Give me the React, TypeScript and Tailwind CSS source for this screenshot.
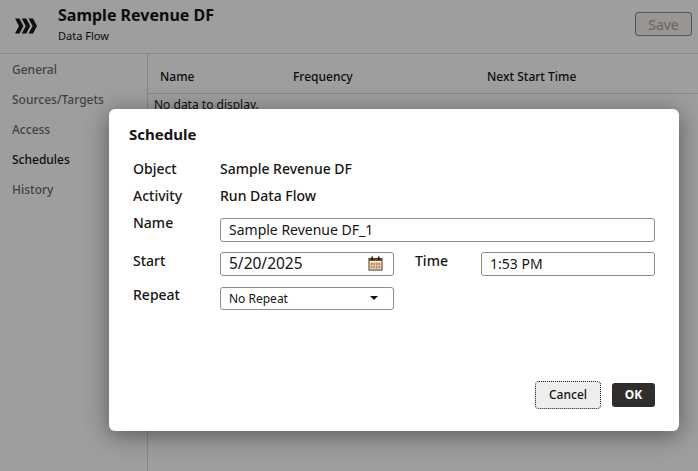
import React from 'react';

const font = "font-['Noto_Sans','Open_Sans',sans-serif]";

const navItems = ['General', 'Sources/Targets', 'Access', 'Schedules', 'History'];

const Chevrons = () => (
  <svg width="24" height="16" viewBox="0 0 24 16" fill="#161513">
    <path d="M0 0.5h4.4l4 7.5-4 7.5H0L4 8z" />
    <path d="M6.8 0.5h4.4l4 7.5-4 7.5H6.8L10.8 8z" />
    <path d="M13.6 0.5H18l4 7.5-4 7.5h-4.4L17.6 8z" />
  </svg>
);

const CalendarIcon = () => (
  <svg width="15" height="15" viewBox="0 0 15 15" fill="none">
    <rect x="1" y="2.5" width="13" height="11.5" stroke="#3a2a1c" strokeWidth="1" />
    <rect x="1" y="2.5" width="13" height="2.5" fill="#7a4a1c" />
    <rect x="3.5" y="0.5" width="1.5" height="3.5" fill="#161513" />
    <rect x="10" y="0.5" width="1.5" height="3.5" fill="#161513" />
    <rect x="2.5" y="6.5" width="10" height="6" fill="#c08a50" />
    <path d="M5 6.5v6M7.5 6.5v6M10 6.5v6M2.5 9.5h10" stroke="#e8e0d8" strokeWidth="0.7" />
  </svg>
);

const App: React.FC = () => {
  return (
    <div className={`relative h-[471px] w-[698px] overflow-hidden bg-white text-[#161513] ${font}`}>
      <header className="flex h-[54px] items-center border-b border-[#dcdcdc] pr-[6px]">
        <div className="ml-[15px] mt-[-1px] w-[43px]">
          <Chevrons />
        </div>
        <div className="flex-1 self-start pt-[3px]">
          <h1 className="text-[16px] font-bold leading-[24px]">Sample Revenue DF</h1>
          <p className="mt-[2px] text-[11px] leading-[14px]">Data Flow</p>
        </div>
        <button className="mt-[-5px] h-[24px] w-[57px] rounded-[3px] border border-[#8d8985] bg-[#f5f0ee] text-[14px] text-[#a8a5a2]">
          Save
        </button>
      </header>

      <div className="flex h-[417px]">
        <nav className="flex w-[148px] flex-col gap-[11px] border-r border-[#dcdcdc] pl-[12px] pt-[6px]">
          {navItems.map((item) => (
            <a
              key={item}
              className={`text-[12px] font-medium leading-[19px] ${item === 'Schedules' ? 'text-[#161513]' : 'text-[#6d6c6a]'}`}
            >
              {item}
            </a>
          ))}
        </nav>
        <div className="flex-1">
          <div className="grid h-[40px] grid-cols-[133px_194px_1fr] items-center border-b border-[#dcdcdc] pl-[12px] pt-[6px] text-[12px] font-medium">
            <span>Name</span>
            <span>Frequency</span>
            <span>Next Start Time</span>
          </div>
          <p className="pl-[6px] pt-[2px] text-[12px] leading-[18px]">No data to display.</p>
        </div>
      </div>

      <div className="absolute inset-0 bg-black/[0.38]">
        <div className="ml-[109px] mt-[109px] flex h-[322px] w-[570px] flex-col rounded-[6px] bg-white pl-[20px] pr-[24px] shadow-[0_4px_24px_rgba(0,0,0,0.45)]">
          <h2 className="pt-[15px] text-[15px] font-bold leading-[20px]">Schedule</h2>

          <div className="mt-[15px] pl-[4px] text-[14px] font-medium">
            <div className="flex h-[18px] items-center">
              <span className="w-[87px]">Object</span>
              <span>Sample Revenue DF</span>
            </div>
            <div className="mt-[9px] flex h-[18px] items-center">
              <span className="w-[87px]">Activity</span>
              <span>Run Data Flow</span>
            </div>

            <div className="mt-[14px] flex h-[24px]">
              <span className="mt-[-4px] w-[87px] leading-[18px]">Name</span>
              <div className="flex h-[24px] flex-1 items-center rounded-[3px] border border-[#8f8d8b] pb-[1px] pl-[8px] text-[14px] font-normal">
                Sample Revenue DF_1
              </div>
            </div>

            <div className="mt-[10px] flex h-[24px]">
              <span className="w-[87px] leading-[18px]">Start</span>
              <div className="flex h-[24px] w-[174px] items-center justify-between rounded-[3px] border border-[#8f8d8b] pb-[1px] pl-[8px] pr-[10px] text-[15.5px] font-normal">
                5/20/2025
                <CalendarIcon />
              </div>
              <span className="ml-[21px] w-[66px] leading-[18px]">Time</span>
              <div className="flex h-[24px] flex-1 items-center rounded-[3px] border border-[#8f8d8b] pb-[1px] pl-[8px] text-[14px] font-normal">
                1:53 PM
              </div>
            </div>

            <div className="mt-[11px] flex h-[23px]">
              <span className="mt-[-1px] w-[87px] leading-[18px]">Repeat</span>
              <div className="flex h-[23px] w-[174px] items-center justify-between rounded-[3px] border border-[#8f8d8b] pl-[8px] pr-[15px] text-[12px] font-normal">
                No Repeat
                <span className="mt-[-2px] h-0 w-0 border-x-[4px] border-t-[4px] border-x-transparent border-t-[#161513]" />
              </div>
            </div>
          </div>

          <div className="mb-[22px] mt-auto flex justify-end gap-[11px]">
            <button className="h-[28px] w-[66px] rounded-[4px] border border-dotted border-[#161513] bg-[#eeeeec] text-[12px] font-medium">
              Cancel
            </button>
            <button className="mt-[2px] h-[24px] w-[43px] rounded-[3px] bg-[#312d2a] text-[12px] font-bold text-white">
              OK
            </button>
          </div>
        </div>
      </div>
    </div>
  );
};

export default App;
